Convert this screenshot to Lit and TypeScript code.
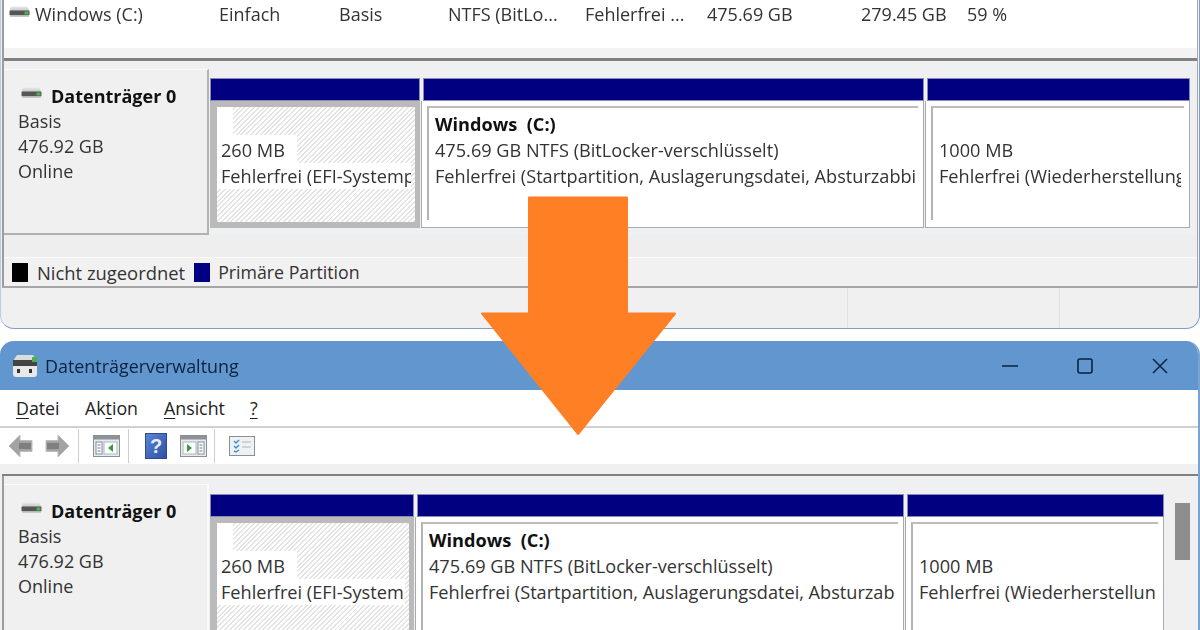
import { LitElement, html, css, svg } from "lit";
import { customElement } from "lit/decorators.js";

const diskIcon = html`<svg class="disk" viewBox="0 0 21 12" width="21" height="12">
  <defs><linearGradient id="dg" x1="0" y1="0" x2="0" y2="1"><stop offset="0" stop-color="#e9e9e9"/><stop offset="1" stop-color="#c4c4c4"/></linearGradient></defs>
  <path d="M2 0.5H18L20.5 5H0.5Z" fill="url(#dg)"/>
  <rect x="0.5" y="4.5" width="20" height="5" rx="1" fill="#555"/>
  <rect x="15.5" y="5.5" width="4" height="3" fill="#4caf50"/>
  <rect x="1" y="9.5" width="19" height="1.5" fill="#c9c9c9"/>
</svg>`;

const windowIcon = (kind: "l" | "r") => html`<svg viewBox="0 0 27 22" width="27" height="22">
  <rect x="0.5" y="0.5" width="26" height="21" fill="#e6ebef" stroke="#8a8f94"/>
  <rect x="1" y="1" width="25" height="3.5" fill="#8d9297"/>
  ${kind === "l"
    ? svg`<rect x="3" y="7" width="6" height="12" fill="#fff" stroke="#7d8ea0"/><path d="M4.5 10h3M4.5 13h3M4.500 16h3" stroke="#6a7f95"/>
        <rect x="11" y="7" width="13" height="12" fill="#fff" stroke="#a9b4bd"/><path d="M20 9v8l-5-4z" fill="#3c9a3c"/>`
    : svg`<rect x="18" y="7" width="6" height="12" fill="#fff" stroke="#7d8ea0"/><path d="M19.5 10h3M19.5 13h3M19.5 16h3" stroke="#6a7f95"/>
        <rect x="3" y="7" width="13" height="12" fill="#fff" stroke="#a9b4bd"/><path d="M7 9v8l5-4z" fill="#3c9a3c"/>`}
</svg>`;

const navArrow = (flip: boolean) => html`<svg viewBox="0 0 26 24" width="26" height="24" class=${flip ? "flip" : ""}>
  <path d="M1 12L12 1V6.500H24V17.500H12V23Z" fill="#a3a3a3" stroke="#bdbdbd" stroke-linejoin="round"/>
  <rect x="11" y="9" width="12" height="6" fill="#7f7f7f"/>
</svg>`;

interface Part { w: number; kind: "efi" | "main" | "rec"; }

@customElement("app-root")
export class AppRoot extends LitElement {
  static styles = css`
    :host { display: block; width: 1200px; height: 630px; background: #fff; overflow: hidden; position: relative;
      font-family: "Open Sans", "Noto Sans", sans-serif; font-size: 18px; color: #333; }
    .page { display: flex; flex-direction: column; height: 630px; filter: blur(0.45px); }
    .win-top { height: 329px; box-sizing: border-box; flex: none; display: flex; flex-direction: column;
      border: 1px solid #7f9fc4; border-top: none; border-left-color: #b9cde3; border-radius: 0 0 14px 14px; background: #f0f0f0; overflow: hidden; }
    .win-bottom { margin-top: 12px; flex: 1; min-height: 0; display: flex; flex-direction: column; overflow: hidden;
      border-radius: 14px 14px 0 0; border-right: 2px solid #7aa3d4; background: #f0f0f0; }
    .frame { margin: 0 1px 0 1px; border-left: 2px solid #9c9c9c; border-right: 1px solid #a8a8a8; height: 288px; flex: none; display: flex; flex-direction: column; box-sizing: border-box; border-bottom: 2px solid #a6a6a6; }
    .list { height: 48px; flex: none; background: #fff; }
    .vol { height: 28px; display: grid; grid-template-columns: 215px 120px 109px 137px 122px 154px 106px auto; align-items: center; }
    .vol > :first-child { display: flex; align-items: center; gap: 5px; padding-left: 5px; }
    .vol .disk { margin-top: -4px; }
    .hband { height: 10px; flex: none; background: #f3f3f3; }
    .rule { height: 3px; flex: none; background: #808080; }
    .pane { display: flex; gap: 1px; background: #eff0f2; flex: none; align-items: flex-start; padding-top: 8px; }
    .pane.top { height: 166px; }
    .pane.bot { flex: 1; margin-left: 2px; border-left: 2px solid #9c9c9c; min-height: 0; }
    .label { width: 205px; height: 166px; flex: none; box-sizing: border-box; padding: 13.500px 0 0 14px; line-height: 25.3px;
      background: #f0f0f0; border-top: 1px solid #fafafa; border-right: 2px solid #b4b4b4; border-bottom: 2px solid #b0b0b0; }
    .pane.bot .label { height: 200px; border-right: 2px solid #fafafa; border-bottom: none; }
    .title { display: flex; align-items: center; font-weight: 700; color: #111; gap: 9px; margin-left: 3px; }
    .title .disk { margin-top: -6px; }
    .parts { display: flex; gap: 3px; margin-top: 9px; }
    .pane.bot .parts { margin-top: 10px; }
    .part { flex: none; display: flex; flex-direction: column; }
    .head { height: 23px; background: #000080; box-shadow: 0 0 0 1px #8a8ab8 inset; }
    .body { height: 127px; box-sizing: border-box; font-size: 18.15px; }
    .pane.bot .body { height: 200px; }
    .body.efi { background: #bababa; padding: 6px 5px 6px 7px; }
    .hatch { height: 100%; box-sizing: border-box; overflow: hidden;
      background: repeating-linear-gradient(135deg, #fff 0 2px, #e3e3e3 2px 3.4px); }
    .body.plain { margin-left: -2px; background: #fff; border: 1px solid #a9a9a9; border-top: none; padding: 5px 5px 7px 5px; }
    .inner { height: 100%; box-sizing: border-box; border-top: 2px solid #bcbcbc; border-left: 2px solid #b4b4b4; padding: 3px 3px 0 6px; overflow: hidden; }
    .ln { line-height: 26px; white-space: nowrap; overflow: hidden; }
    .hatch .ln { background: #fff; width: fit-content; padding-left: 4px; padding-right: 12px; box-sizing: border-box; }
    .hatch .ln.blank { width: 16px; padding: 0; height: 28px; }
    .hatch .ln.mb { padding-top: 2px; }
    .hatch .ln.full { width: calc(100% - 4px); padding-right: 0; }
    b.vname { color: #111; }
    .gapband { height: 22px; flex: none; background: #eeeeee; }
    .legend { flex: 1; display: flex; align-items: center; gap: 9px; padding-left: 8px; background: #f1f1f1; border-top: 1px solid #fafafa; }
    .sw { width: 16px; height: 19px; flex: none; }
    .sw.k { background: #000; } .sw.n { background: #000080; margin-right: -1px; }
    .lg1 { font-size: 18.4px; } .lg2 { font-size: 17.75px; }
    .status { flex: 1; display: grid; grid-template-columns: 847px 212px 1fr; }
    .status i { border-right: 1px solid #e2e2e2; }
    .status i:last-child { border: none; }
    .titlebar { height: 49px; flex: none; background: #6296ce; display: flex; align-items: center; padding-left: 12px; color: #0b2240; font-size: 17.9px; gap: 7px; }
    .grow { flex: 1; }
    .ctl { width: 68px; height: 49px; display: flex; align-items: center; justify-content: center; flex: none; }
    .ctl.last { margin-right: 4px; }
    .menu { height: 36px; flex: none; background: #fff; border-bottom: 2px solid #d0d0d0; display: flex; align-items: center; padding-left: 16px; color: #222; font-size: 17.8px; }
    .menu span { flex: none; }
    .menu u { text-underline-offset: 3px; }
    .m1 { width: 69px; } .m2 { width: 79px; } .m3 { width: 86px; }
    .tools { height: 36px; flex: none; background: #fff; display: flex; align-items: center; padding-left: 8px; }
    .flip { transform: scaleX(-1); }
    .sep { width: 1px; height: 34px; background: #cfcfcf; flex: none; }
    .tools svg { flex: none; display: block; }
    .sp8 { width: 8px; } .sp10 { width: 10px; } .sp14 { width: 14px; } .sp16 { width: 16px; } .sp13 { width: 13px; } .sp7 { width: 7px; }
    .band2 { height: 10px; flex: none; background: #f0f0f0; }
    .rule2 { height: 2px; flex: none; margin-left: 2px; background: #808080; }
    .scroll { position: absolute; left: 1168px; top: 476px; bottom: 0; width: 28px; background: #f0f0f0; }
    .thumb { position: absolute; left: 7px; top: 27px; width: 15px; height: 57px; background: #8e8e8e; }
    .arrow { position: absolute; left: 0; top: 0; pointer-events: none; }
  `;

  private part(p: Part) {
    if (p.kind === "efi") {
      return html`<div class="part" style="width:${p.w}px"><div class="head"></div>
        <div class="body efi"><div class="hatch">
          <div class="ln blank"></div>
          <div class="ln mb">260 MB</div>
          <div class="ln full">Fehlerfrei (EFI-Systempartition)</div>
        </div></div></div>`;
    }
    const main = p.kind === "main";
    return html`<div class="part" style="width:${p.w}px"><div class="head"></div>
      <div class="body plain"><div class="inner">
        ${main
          ? html`<div class="ln"><b class="vname">Windows&nbsp; (C:)</b></div>
              <div class="ln">475.69 GB NTFS (BitLocker-verschlüsselt)</div>
              <div class="ln">Fehlerfrei (Startpartition, Auslagerungsdatei, Absturzabbild, Primäre Partition)</div>`
          : html`<div class="ln">&nbsp;</div><div class="ln">1000 MB</div>
              <div class="ln">Fehlerfrei (Wiederherstellungspartition)</div>`}
      </div></div></div>`;
  }

  private disk(parts: Part[], cls: string) {
    return html`<div class="pane ${cls}">
      <div class="label">
        <div class="title">${diskIcon}<span>Datenträger 0</span></div>
        <div>Basis</div><div>476.92 GB</div><div>Online</div>
      </div>
      <div class="parts">${parts.map((p) => this.part(p))}</div>
    </div>`;
  }

  render() {
    return html`<div class="page">
      <section class="win-top">
        <div class="frame">
          <div class="list">
            <div class="vol">
              <div>${diskIcon}<span>Windows (C:)</span></div>
              <span>Einfach</span><span>Basis</span><span>NTFS (BitLo...</span><span>Fehlerfrei ...</span>
              <span>475.69 GB</span><span>279.45 GB</span><span>59 %</span>
            </div>
          </div>
          <div class="hband"></div>
          <div class="rule"></div>
          ${this.disk([{ w: 210, kind: "efi" }, { w: 501, kind: "main" }, { w: 263, kind: "rec" }], "top")}
          <div class="gapband"></div>
          <div class="legend"><div class="sw k"></div><span class="lg1">Nicht zugeordnet</span><div class="sw n"></div><span class="lg2">Primäre Partition</span></div>
        </div>
        <div class="status"><i></i><i></i><i></i></div>
      </section>

      <section class="win-bottom">
        <div class="titlebar">
          <svg viewBox="0 0 26 24" width="26" height="24">
            <path d="M5 1H21L25 7H1Z" fill="#dcdcdc"/>
            <rect x="1" y="6" width="24" height="6" fill="#444"/>
            <rect x="20" y="3" width="5" height="5" fill="#4caf50"/>
            <path d="M1 12H25V20Q25 23 22 23H4Q1 23 1 20Z" fill="#e8e8e8"/>
            <rect x="5" y="15" width="3" height="4" fill="#333"/><rect x="17" y="15" width="3" height="4" fill="#333"/>
          </svg>
          <span>Datenträgerverwaltung</span>
          <div class="grow"></div>
          <div class="ctl"><svg viewBox="0 0 16 16" width="16" height="16"><path d="M0 8H16" stroke="#0b2240" stroke-width="1.4"/></svg></div>
          <div class="ctl"><svg viewBox="0 0 16 16" width="16" height="16"><rect x="1" y="1" width="14" height="14" rx="2" fill="none" stroke="#0b2240" stroke-width="1.6"/></svg></div>
          <div class="ctl last"><svg viewBox="0 0 16 16" width="16" height="16"><path d="M1 1L15 15M15 1L1 15" stroke="#0b2240" stroke-width="1.5"/></svg></div>
        </div>
        <div class="menu">
          <span class="m1"><u>D</u>atei</span><span class="m2">Ak<u>t</u>ion</span><span class="m3"><u>A</u>nsicht</span><span><u>?</u></span>
        </div>
        <div class="tools">
          ${navArrow(false)}<span class="sp10"></span>${navArrow(true)}
          <span class="sp8"></span><div class="sep"></div><span class="sp14"></span>
          ${windowIcon("l")}<span class="sp8"></span><div class="sep"></div><span class="sp16"></span>
          <svg viewBox="0 0 22 26" width="22" height="26"><defs><linearGradient id="hg" x1="0" y1="0" x2="1" y2="1"><stop offset="0" stop-color="#5a86da"/><stop offset="1" stop-color="#2f4f9f"/></linearGradient></defs><rect x="0.5" y="0.5" width="21" height="25" fill="url(#hg)" stroke="#2c4a94"/><text x="11" y="20" text-anchor="middle" font-family="Liberation Sans" font-weight="700" font-size="20" fill="#e6ecfa">?</text></svg>
          <span class="sp13"></span>${windowIcon("r")}<span class="sp7"></span><div class="sep"></div><span class="sp14"></span>
          <svg viewBox="0 0 26 20" width="26" height="20"><rect x="0.5" y="0.5" width="25" height="19" fill="#eef2f5" stroke="#8a8f94"/><path d="M5 5l2 2 3-3M5 10l2 2 3-3M5 15l2 1 3-2" fill="none" stroke="#3f8fd6" stroke-width="1.5"/><path d="M13 6h9M13 11h9" stroke="#b0b5ba"/></svg>
        </div>
        <div class="band2"></div>
        <div class="rule2"></div>
        ${this.disk([{ w: 204, kind: "efi" }, { w: 487, kind: "main" }, { w: 257, kind: "rec" }], "bot")}
      </section>
      <div class="scroll"><div class="thumb"></div></div>
    </div>
    <svg class="arrow" width="1200" height="630" viewBox="0 0 1200 630">
      <path d="M529 197.500H627V313.500H675L578 434L482 313.500H529Z" fill="#fe7f24" stroke="#fe7f24" stroke-width="2" stroke-linejoin="round"/>
    </svg>`;
  }
}
